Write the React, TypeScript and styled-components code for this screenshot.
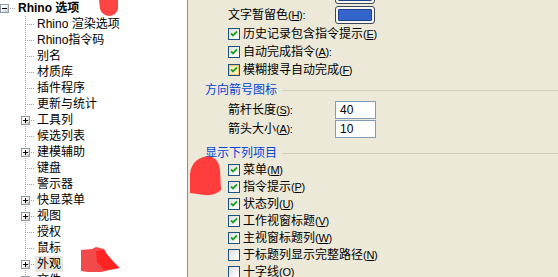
import React from 'react';
import styled, { createGlobalStyle, css } from 'styled-components';

const GlobalStyle = createGlobalStyle`
  html, body {
    margin: 0;
    padding: 0;
    width: 558px;
    height: 277px;
    overflow: hidden;
    background: #ECE9D8;
  }
  body {
    font-family: "Liberation Sans", "Noto Sans CJK SC", sans-serif;
    font-size: 12px;
    color: #000;
  }
`;

const Window = styled.div`
  position: relative;
  display: flex;
  width: 558px;
  height: 277px;
  overflow: hidden;
`;

/* ---------- tree ---------- */

const TreePane = styled.div`
  flex: none;
  width: 187px;
  background: #fff;
  border-right: 1px solid #8d8e8c;
  display: flex;
  flex-direction: column;
  overflow: hidden;
`;

const TreeRow = styled.div<{ $level: number }>`
  flex: none;
  display: flex;
  align-items: center;
  height: 16px;
  padding-left: ${(p) => (p.$level === 0 ? 0 : 17)}px;
`;

const Gutter = styled.span<{ $level: number }>`
  position: relative;
  flex: none;
  align-self: stretch;
  width: ${(p) => (p.$level === 0 ? 16 : 18)}px;

  ${(p) =>
    p.$level > 0 &&
    css`
      &::before {
        content: '';
        position: absolute;
        left: 8px;
        top: 0;
        bottom: 0;
        width: 1px;
        background-image: linear-gradient(to bottom, #a0a0a0 50%, transparent 50%);
        background-size: 1px 2px;
      }
    `}

  &::after {
    content: '';
    position: absolute;
    left: ${(p) => (p.$level === 0 ? 4 : 8)}px;
    right: 1px;
    top: 8px;
    height: 1px;
    background-image: linear-gradient(to right, #a0a0a0 50%, transparent 50%);
    background-size: 2px 1px;
  }
`;

const Expander = styled.span<{ $level: number; $open: boolean }>`
  position: absolute;
  z-index: 1;
  left: ${(p) => (p.$level === 0 ? 0 : 4)}px;
  top: 4px;
  width: 9px;
  height: 9px;
  box-sizing: border-box;
  border: 1px solid #8a9aa9;
  background: linear-gradient(135deg, #ffffff 30%, #c9c7ba 100%);

  &::before {
    content: '';
    position: absolute;
    left: 1px;
    top: 3px;
    width: 5px;
    height: 1px;
    background: #000;
  }

  ${(p) =>
    !p.$open &&
    css`
      &::after {
        content: '';
        position: absolute;
        left: 3px;
        top: 1px;
        width: 1px;
        height: 5px;
        background: #000;
      }
    `}
`;

const TreeLabel = styled.span<{ $bold?: boolean; $selected?: boolean }>`
  display: inline-block;
  height: 16px;
  line-height: 16px;
  padding: 0 2px;
  white-space: nowrap;
  font-weight: ${(p) => (p.$bold ? 700 : 400)};
  background: ${(p) => (p.$selected ? '#E9E7DD' : 'transparent')};
`;

type TreeItem = { label: string; level: number; children?: boolean; open?: boolean; bold?: boolean; selected?: boolean };

const treeItems: TreeItem[] = [
  { label: 'Rhino 选项', level: 0, children: true, open: true, bold: true },
  { label: 'Rhino 渲染选项', level: 1 },
  { label: 'Rhino指令码', level: 1 },
  { label: '别名', level: 1 },
  { label: '材质库', level: 1 },
  { label: '插件程序', level: 1 },
  { label: '更新与统计', level: 1 },
  { label: '工具列', level: 1, children: true },
  { label: '候选列表', level: 1 },
  { label: '建模辅助', level: 1, children: true },
  { label: '键盘', level: 1 },
  { label: '警示器', level: 1 },
  { label: '快显菜单', level: 1, children: true },
  { label: '视图', level: 1, children: true },
  { label: '授权', level: 1 },
  { label: '鼠标', level: 1 },
  { label: '外观', level: 1, children: true, selected: true },
  { label: '文件', level: 1, children: true },
];

/* ---------- options ---------- */

const OptionsPane = styled.div`
  flex: 1;
  min-width: 0;
  background: #ECE9D8;
  display: flex;
  flex-direction: column;
  overflow: hidden;
`;

const OptionsBody = styled.div`
  display: flex;
  flex-direction: column;
  margin-top: -15px;
`;

const FieldRow = styled.div<{ $h: number }>`
  flex: none;
  display: flex;
  align-items: center;
  height: ${(p) => p.$h}px;
  padding-left: 40px;
  white-space: nowrap;
`;

const FieldLabel = styled.span`
  flex: none;
  width: 107px;
  line-height: 14px;
`;

const Key = styled.span`
  font-family: "Liberation Sans", sans-serif;
  font-size: 11px;
  letter-spacing: -0.3px;
`;

const Swatch = styled.span`
  flex: none;
  width: 40px;
  height: 18px;
  box-sizing: border-box;
  border: 1px solid #3b4659;
  border-radius: 3px;
  padding: 2px;
  background: #f6f5f0;
  display: flex;
`;

const SwatchColor = styled.span<{ $color: string }>`
  flex: 1;
  border: 1px solid #1f3f8c;
  border-radius: 1px;
  background: ${(p) => p.$color};
`;

const TextBox = styled.span`
  flex: none;
  width: 41px;
  height: 18px;
  box-sizing: border-box;
  border: 1px solid #7f9db9;
  background: #fff;
  padding-left: 4px;
  line-height: 16px;
  font-size: 12px;
`;

const Box = styled.span<{ $hot?: boolean }>`
  flex: none;
  width: 12px;
  height: 12px;
  box-sizing: border-box;
  margin-right: 3px;
  border: 1px solid #1c5180;
  background: linear-gradient(135deg, #dcdcd7 0%, #ffffff 85%);
  display: flex;
  align-items: center;
  justify-content: center;
  ${(p) =>
    p.$hot &&
    css`
      background: linear-gradient(135deg, #fde9a8 0%, #fff6d8 85%);
      box-shadow: inset 0 0 0 1px #f8c760;
    `}
`;

const CheckText = styled.span`
  line-height: 14px;
`;

const SectionHeader = styled.div<{ $h: number; $mt?: number }>`
  flex: none;
  display: flex;
  align-items: center;
  height: ${(p) => p.$h}px;
  margin-top: ${(p) => p.$mt ?? 0}px;
  padding-left: 17px;
`;

const SectionTitle = styled.span`
  color: #0046d5;
  white-space: nowrap;
  line-height: 14px;
`;

const SectionRule = styled.span`
  flex: 1;
  height: 1px;
  margin-left: 5px;
  margin-top: 2px;
  background: #d0d0bf;
`;

const Marks = styled.svg`
  position: absolute;
  left: 0;
  top: 0;
  pointer-events: none;
`;

const Mn = ({ k, colon }: { k: string; colon?: boolean }) => (
  <Key>
    (<u>{k}</u>){colon ? ':' : ''}
  </Key>
);

const Check = ({ checked = true, hot }: { checked?: boolean; hot?: boolean }) => (
  <Box $hot={hot}>
    {checked && (
      <svg width="8" height="8" viewBox="0 0 8 8">
        <path d="M1 3.5 L3 5.5 L7 1.5" fill="none" stroke="#21a121" strokeWidth="1.8" />
      </svg>
    )}
  </Box>
);

type CheckItem = { text: string; k: string; checked?: boolean; hot?: boolean; colon?: boolean };

const topChecks: CheckItem[] = [
  { text: '历史记录包含指令提示', k: 'E' },
  { text: '自动完成指令', k: 'A', colon: true },
  { text: '模糊搜寻自动完成', k: 'F', hot: true },
];

const showChecks: CheckItem[] = [
  { text: '菜单', k: 'M' },
  { text: '指令提示', k: 'P' },
  { text: '状态列', k: 'U' },
  { text: '工作视窗标题', k: 'V' },
  { text: '主视窗标题列', k: 'W' },
  { text: '于标题列显示完整路径', k: 'N', checked: false },
  { text: '十字线', k: 'O', checked: false },
];

export default function App() {
  return (
    <>
      <GlobalStyle />
      <Window>
        <TreePane>
          {treeItems.map((it) => (
            <TreeRow key={it.label} $level={it.level}>
              <Gutter $level={it.level}>
                {it.children && <Expander $level={it.level} $open={!!it.open} />}
              </Gutter>
              <TreeLabel $bold={it.bold} $selected={it.selected}>
                {it.label}
              </TreeLabel>
            </TreeRow>
          ))}
        </TreePane>

        <OptionsPane>
          <OptionsBody>
            <FieldRow $h={20}>
              <FieldLabel />
              <Swatch>
                <SwatchColor $color="#ffffff" />
              </Swatch>
            </FieldRow>
            <FieldRow $h={20}>
              <FieldLabel>
                文字暂留色<Mn k="H" colon />
              </FieldLabel>
              <Swatch>
                <SwatchColor $color="#3465cc" />
              </Swatch>
            </FieldRow>
            {topChecks.map((c) => (
              <FieldRow key={c.k} $h={18}>
                <Check checked={c.checked !== false} hot={c.hot} />
                <CheckText>
                  {c.text}
                  <Mn k={c.k} colon={c.colon} />
                </CheckText>
              </FieldRow>
            ))}

            <SectionHeader $h={21}>
              <SectionTitle>方向箭号图标</SectionTitle>
              <SectionRule />
            </SectionHeader>
            <FieldRow $h={19}>
              <FieldLabel>
                箭杆长度<Mn k="S" colon />
              </FieldLabel>
              <TextBox>40</TextBox>
            </FieldRow>
            <FieldRow $h={19}>
              <FieldLabel>
                箭头大小<Mn k="A" colon />
              </FieldLabel>
              <TextBox>10</TextBox>
            </FieldRow>

            <SectionHeader $h={17} $mt={6}>
              <SectionTitle>显示下列项目</SectionTitle>
              <SectionRule />
            </SectionHeader>
            {showChecks.map((c) => (
              <FieldRow key={c.k} $h={17}>
                <Check checked={c.checked !== false} hot={c.hot} />
                <CheckText>
                  {c.text}
                  <Mn k={c.k} colon={c.colon} />
                </CheckText>
              </FieldRow>
            ))}
          </OptionsBody>
        </OptionsPane>

        <Marks width="558" height="277" viewBox="0 0 558 277">
          <path d="M99 0 L118 0 L118 9 Q116 16 109 16 Q102 15 100 9 Z" fill="#ff4444" />
          <path
            d="M81 250 L92 249 L96 247 L104 249 L107 254 L113 261 L120 268 L110 270 L101 272 L88 272 L81 271 Z"
            fill="#f24a4a"
          />
          <path d="M96 251 L104 250 L107 255 L113 262 L119 268 L104 270 L97 262 Z" fill="#ff2424" />
          <path
            d="M196 161 Q203 155 212 157 Q219 160 220 170 L221 190 Q215 196 205 195 L190 193 L190 174 Q191 165 196 161 Z"
            fill="#ff3d3d"
          />
        </Marks>
      </Window>
    </>
  );
}
